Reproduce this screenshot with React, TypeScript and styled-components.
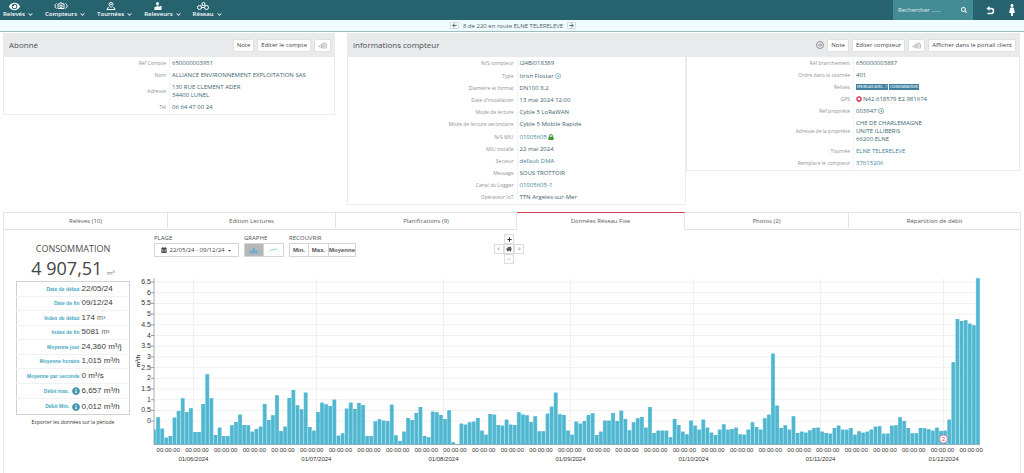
import React from "react";
import styled, { createGlobalStyle } from "styled-components";
import {
  FaEye,
  FaFemale,
  FaSearch,
  FaChevronDown,
  FaArrowLeft,
  FaArrowRight,
  FaCalendarAlt,
  FaInfoCircle,
  FaLock,
  FaCaretDown,
  FaHome,
  FaPlus,
  FaMinus,
} from "react-icons/fa";

const Global = createGlobalStyle`
  * { box-sizing: border-box; }
  body {
    margin: 0;
    background: #fff;
    color: #4a5a60;
    font-family: "Open Sans", "Liberation Sans", sans-serif;
    font-size: 6px;
    line-height: 8px;
  }
  button, input { font: inherit; color: inherit; margin: 0; }
  button { cursor: pointer; }
  a { color: inherit; text-decoration: none; }
  svg { display: block; }
`;

/* ---------- top bar ---------- */

const TopBar = styled.header`
  display: flex;
  align-items: stretch;
  height: 20px;
  background: #27626f;
  color: #fff;
`;

const Nav = styled.nav`
  display: flex;
  gap: 12px;
  flex: 1;
  padding-left: 3px;
`;

const NavItem = styled.button`
  display: grid;
  grid-template-columns: auto auto;
  grid-template-rows: 8px 8px;
  column-gap: 3px;
  align-content: center;
  align-items: center;
  justify-items: center;
  padding: 0;
  border: 0;
  background: none;
  font-size: 6px;
  font-weight: 600;
  white-space: nowrap;
`;

const NavLabel = styled.span`
  grid-row: 2;
  grid-column: 1;
`;

const NavChevron = styled.span`
  grid-row: 2;
  grid-column: 2;
`;

const SearchBox = styled.label`
  display: flex;
  align-items: center;
  width: 80px;
  padding: 0 6px 0 5px;
  background: #438b95;
`;

const SearchInput = styled.input`
  flex: 1;
  min-width: 0;
  padding: 0;
  border: 0;
  outline: 0;
  background: none;
  font-size: 6px;
  &::placeholder { color: #e3f0f2; opacity: 1; }
`;

const TopIcons = styled.div`
  display: flex;
  align-items: center;
  gap: 11px;
  padding: 0 6px 0 13px;
`;

const PlainButton = styled.button`
  padding: 0;
  border: 0;
  background: none;
`;

/* ---------- pager ---------- */

const Pager = styled.div`
  display: flex;
  align-items: center;
  justify-content: center;
  gap: 4px;
  height: 12px;
  padding-left: 2px;
  border-bottom: 1px solid #9dbac2;
  background: #effcff;
`;

const PagerButton = styled.button`
  display: flex;
  align-items: center;
  justify-content: center;
  width: 9px;
  height: 7px;
  padding: 0;
  border: 1px solid #cfdfe3;
  border-radius: 1px;
  background: #f8feff;
  color: #44707c;
`;

/* ---------- panels ---------- */

const Panels = styled.main`
  display: grid;
  grid-template-columns: 332fr 673fr;
  gap: 12px;
  align-items: start;
  padding: 1px 4px 7px 3px;
`;

const PanelHead = styled.div`
  display: flex;
  align-items: center;
  gap: 3px;
  height: 24px;
  padding: 0 4px 0 6px;
  background: #e9eaec;
`;

const PanelTitle = styled.h2`
  flex: 1;
  margin: 0;
  font-size: 8px;
  line-height: 10px;
  font-weight: 400;
  color: #4b4f54;
`;

const HeadButton = styled.button`
  display: flex;
  align-items: center;
  height: 13px;
  padding: 0 3px;
  border: 1px solid #e0e1e3;
  border-radius: 1px;
  background: #fff;
  font-size: 6px;
  color: #3f4448;
  white-space: nowrap;
`;

const Columns = styled.div`
  display: grid;
  grid-template-columns: 339fr 334fr;
  align-items: start;
`;

const Details = styled.dl`
  margin: 0;
  padding-bottom: 1px;
  border: 1px solid #ececee;
  border-top: 0;
`;

const Row = styled.div<{ $tall?: boolean }>`
  display: grid;
  grid-template-columns: 1fr 1fr;
  align-items: center;
  min-height: ${(p) => (p.$tall ? 13 : 12)}px;
`;

const Term = styled.dt`
  padding-right: 3px;
  font-size: 5px;
  text-align: right;
  color: #8d9397;
`;

const Value = styled.dd<{ $link?: boolean }>`
  display: flex;
  align-items: center;
  gap: 1px;
  min-height: 12px;
  margin: 0;
  padding: 2px 0 2px 2px;
  border-left: 1px solid #f3f3f4;
  color: ${(p) => (p.$link ? "#3f7f9c" : "#3d6470")};
  white-space: pre-line;
`;

const Tag = styled.span`
  padding: 0 1px;
  background: #3f7f9c;
  color: #d5e6ee;
  font-size: 3px;
  line-height: 6px;
  font-weight: 700;
  white-space: nowrap;
`;

/* ---------- tabs ---------- */

const Tabs = styled.div`
  display: grid;
  grid-template-columns: 165fr 168fr 181fr 168fr 164fr 172fr;
  margin: 0 3px;
`;

const Tab = styled.button<{ $active?: boolean }>`
  height: 18px;
  padding: 0;
  border: 0;
  border-top: 1px solid ${(p) => (p.$active ? "#d9404f" : "#e4e4e6")};
  border-right: 1px solid #e4e4e6;
  border-bottom: 1px solid ${(p) => (p.$active ? "#ffffff" : "#e4e4e6")};
  background: #fff;
  font-size: 6px;
  color: #55595d;
  &:first-child { border-left: 1px solid #e4e4e6; }
`;

const TabPanel = styled.section`
  display: grid;
  grid-template-columns: 126px 1fr;
  margin: 0 3px;
  padding-bottom: 8px;
  border: solid #e8e8ea;
  border-width: 0 1px;
`;

/* ---------- summary ---------- */

const Summary = styled.div`
  padding: 12px 0 0 12px;
  text-align: center;
`;

const SummaryTitle = styled.h3`
  margin: 0;
  font-size: 9px;
  line-height: 14px;
  font-weight: 400;
  color: #4c4c4c;
`;

const Total = styled.div`
  font-size: 18px;
  line-height: 25px;
  color: #444;
  small { font-size: 6px; line-height: 6px; color: #777; }
`;

const Stats = styled.table`
  width: 100%;
  height: 134px;
  border: 1px solid #cfd3d6;
  border-collapse: collapse;
  font-family: "Liberation Sans", Arial, sans-serif;
  tr + tr { border-top: 1px solid #f0f1f2; }
`;

const StatName = styled.th`
  width: 65px;
  padding: 0 2px 0 0;
  font-size: 5px;
  text-align: right;
  white-space: nowrap;
  color: #4aa7bf;
  svg { display: inline-block; vertical-align: middle; color: #3f93ad; margin-left: 1px; }
`;

const StatValue = styled.td`
  padding: 0;
  font-size: 8px;
  text-align: left;
  white-space: nowrap;
  color: #3a3a3a;
  small { font-size: 7px; color: #666; }
`;

const ExportLink = styled.a`
  display: block;
  margin-top: 3px;
  font-size: 5px;
  color: #333;
`;

/* ---------- chart toolbar ---------- */

const Toolbar = styled.div`
  display: grid;
  grid-template-columns: 342fr 30px 498fr;
  align-items: start;
  height: 40px;
  padding: 4px 0 0 24px;
`;

const Controls = styled.div`
  display: flex;
  gap: 5px;
`;

const Group = styled.div`
  display: flex;
  flex-direction: column;
  gap: 1px;
  line-height: 8px;
  color: #4c5054;
`;

const GroupCaption = styled.span`
  height: 8px;
`;

const Segments = styled.div`
  display: flex;
`;

const Segment = styled.button<{ $on?: boolean; $width: number }>`
  display: flex;
  align-items: center;
  justify-content: center;
  gap: 2px;
  width: ${(p) => p.$width}px;
  height: 14px;
  padding: 0;
  border: 1px solid #d3d5d7;
  background: ${(p) => (p.$on ? "#b4b8bb" : "#fff")};
  color: #3f4448;
  white-space: nowrap;
  & + & { border-left-width: 0; }
`;

const SegmentText = styled.span`
  font-family: "Liberation Sans", Arial, sans-serif;
  font-size: 6px;
  font-weight: 700;
  color: #555;
`;

const PanPad = styled.div`
  display: grid;
  grid-template-columns: repeat(3, 10px);
  grid-template-rows: repeat(3, 10px);
  grid-template-areas: ". up ." "left home right" ". down .";
`;

const PanButton = styled.button<{ $area: string; $faint?: boolean }>`
  grid-area: ${(p) => p.$area};
  display: flex;
  align-items: center;
  justify-content: center;
  padding: 0;
  border: 1px solid #dcdcdc;
  background: #fff;
  color: ${(p) => (p.$faint ? "#b0b3b5" : "#333")};
`;

const ChartSvg = styled.svg`
  width: 100%;
  height: auto;
  font-family: "Liberation Sans", Arial, sans-serif;
  font-size: 6px;
  fill: #333;
`;

/* ---------- icons ---------- */

const MeterIcon = () => (
  <svg width="14" height="8" viewBox="0 0 28 16" fill="none" stroke="#fff" strokeWidth="2">
    <path d="M5 3C1 5 1 11 5 13M23 3c4 2 4 8 0 10M8 4h3l1-2h4l1 2h3v9H8z" />
    <circle cx="14" cy="8.500" r="2.500" />
  </svg>
);

const RouteIcon = () => (
  <svg width="10" height="8" viewBox="0 0 20 16" fill="none" stroke="#fff" strokeWidth="2">
    <path d="M10 11C7 8 6 6.500 6 5a4 4 0 0 1 8 0c0 1.500-1 3-4 6z" />
    <circle cx="10" cy="5" r="1" />
    <path d="M5 10l-3 5h16l-3-5" />
  </svg>
);

const ReaderIcon = () => (
  <svg width="8" height="8" viewBox="0 0 16 16" fill="#fff">
    <circle cx="7" cy="3" r="3" />
    <path d="M5 7h4v3h2V8h4v8H1v-6h4z" />
  </svg>
);

const NetworkIcon = () => (
  <svg width="14" height="8" viewBox="0 0 28 16" fill="none" stroke="#fff" strokeWidth="2">
    <circle cx="7" cy="11" r="4" />
    <circle cx="21" cy="11" r="4" />
    <circle cx="15" cy="4" r="3" />
    <path d="M11 11h6M13 6l-3 3M17 6l2 2" />
  </svg>
);

const BackIcon = () => (
  <svg width="9" height="9" viewBox="0 0 18 18" fill="none" stroke="#fff" strokeWidth="3">
    <path d="M4 5h6a5 5 0 0 1 0 10H3" />
    <path d="M1 5l6-5v10z" fill="#fff" stroke="none" />
  </svg>
);

const PinIcon = () => (
  <svg width="6" height="7" viewBox="0 0 12 14" fill="none" stroke="#d03a63" strokeWidth="3">
    <circle cx="6" cy="6" r="4" />
    <path d="M4 10l2 3 2-3z" fill="#d03a63" stroke="none" />
  </svg>
);

const TagIcon = () => (
  <svg width="9" height="7" viewBox="0 0 18 14" fill="none" stroke="#8a9094" strokeWidth="1">
    <path d="M1 9l7-4v6zM8 4h9v8H8zM10 4l3-3 3 3" />
    <circle cx="12.500" cy="8" r="2" />
  </svg>
);

const RingIcon = ({ size = 6, color = "#5b9db5" }: { size?: number; color?: string }) => (
  <svg width={size} height={size} viewBox="0 0 16 16" fill="none" stroke={color} strokeWidth="1.500">
    <circle cx="8" cy="8" r="7" />
    <path d="M4 8h7M8 5l3 3-3 3" />
  </svg>
);

const BarsIcon = () => (
  <svg width="10" height="7" viewBox="0 0 20 14" fill="#5fa9cc">
    <path d="M1 13V9h3v4zM5 13V6h3v7zM9 13V2h3v11zM13 13V7h3v6zM17 13v-3h2v3z" />
  </svg>
);

const LineIcon = () => (
  <svg width="9" height="6" viewBox="0 0 18 12" fill="none" stroke="#9ccdd6" strokeWidth="2">
    <path d="M1 9l5-4 4 1 3-3 4 4" />
  </svg>
);

/* ---------- chart ---------- */

// Daily consumption, three units per drawn pixel.
const DAILY = [
  43, 80, 46, 19, 24, 79, 99, 137, 96, 107, 36, 36, 120, 209, 137, 27, 49, 24, 24, 56,
  66, 88, 57, 56, 37, 45, 52, 120, 72, 86, 146, 39, 52, 138, 162, 116, 104, 154, 51, 40,
  96, 124, 119, 114, 133, 25, 32, 106, 124, 105, 123, 117, 24, 24, 68, 74, 70, 69, 118, 26,
  9, 37, 78, 72, 93, 111, 24, 20, 97, 95, 87, 75, 101, 5, 0, 61, 58, 65, 67, 78,
  40, 28, 90, 88, 57, 55, 73, 58, 57, 95, 88, 86, 66, 83, 38, 38, 91, 112, 154, 89,
  87, 40, 28, 67, 61, 69, 87, 92, 27, 37, 70, 70, 93, 69, 100, 75, 41, 65, 77, 81,
  49, 111, 33, 40, 40, 40, 20, 75, 57, 37, 29, 70, 55, 43, 73, 49, 34, 27, 43, 59,
  43, 45, 49, 29, 28, 43, 65, 51, 43, 77, 88, 271, 115, 48, 56, 43, 83, 33, 37, 34,
  41, 48, 49, 37, 33, 31, 48, 55, 43, 43, 48, 28, 38, 34, 37, 43, 52, 53, 31, 31,
  55, 56, 80, 69, 48, 32, 32, 48, 47, 44, 40, 49, 39, 40, 73, 245, 375, 369, 371, 361,
  356, 497,
];

const MONTHS: [string, number][] = [
  ["01/06/2024", 10],
  ["01/07/2024", 40],
  ["01/08/2024", 71],
  ["01/09/2024", 102],
  ["01/10/2024", 132],
  ["01/11/2024", 163],
  ["01/12/2024", 193],
];

const LEFT = 24;
const RIGHT = 850;
const BASE = 174;
const STEP = (RIGHT - LEFT) / (DAILY.length - 0.5);
const dayEdge = (day: number) => LEFT + (day - 0.5) * STEP;
const monthX = (day: number) => LEFT - 2 + (day + 0.1) * STEP;

const Chart = () => (
  <ChartSvg viewBox="0 0 890 196" role="img" aria-label="Consommation journalière en m³/h">
    <defs>
      <clipPath id="plot">
        <rect x={LEFT} y="0" width={RIGHT - LEFT} height={BASE} />
      </clipPath>
    </defs>
    {Array.from({ length: 14 }, (_, i) => {
      const y = 12 + i * 10.7;
      return (
        <g key={i}>
          <line x1={LEFT} x2={RIGHT} y1={y} y2={y} stroke="#f0f0f0" />
          <line x1={LEFT - 3} x2={LEFT} y1={y} y2={y} stroke="#777" strokeWidth="0.700" />
          <text x={LEFT - 3} y={y + 2} textAnchor="end" fontSize="7">
            {(6.5 - i * 0.5).toString()}
          </text>
        </g>
      );
    })}
    {MONTHS.map(([label, day]) => (
      <line
        key={label}
        x1={monthX(day)}
        x2={monthX(day)}
        y1="9"
        y2={BASE + 10}
        stroke="#ebebeb"
        strokeDasharray="3 1"
      />
    ))}
    <line x1={LEFT} x2={LEFT} y1="8" y2={BASE} stroke="#888" strokeWidth="0.700" />
    <g clipPath="url(#plot)">
      {DAILY.map((v, i) => (
        <g key={i}>
          <rect x={dayEdge(i)} y={BASE - v / 3} width={STEP} height={v / 3} fill="#86d4e6" />
          <rect x={dayEdge(i) + 0.5} y={BASE - v / 3} width={STEP - 1} height={v / 3} fill="#52b6cf" />
        </g>
      ))}
    </g>
    <line x1={LEFT} x2={RIGHT} y1={BASE + 0.5} y2={BASE + 0.5} stroke="#5a8f9c" strokeWidth="0.700" />
    {Array.from({ length: 29 }, (_, i) => (
      <text key={i} x={38.3 + i * 28.67} y={BASE + 8} textAnchor="middle">
        00:00:00
      </text>
    ))}
    {MONTHS.map(([label, day]) => (
      <text key={label} x={monthX(day)} y={BASE + 17} textAnchor="middle">
        {label}
      </text>
    ))}
    <text transform="translate(10 91) rotate(-90)" textAnchor="middle" fontWeight="700">
      m³/h
    </text>
    <circle cx={monthX(193)} cy="169" r="4" fill="#fff" stroke="#c68aa8" />
    <text x={monthX(193)} y="171" textAnchor="middle" fontSize="5" fill="#b03050">
      2
    </text>
  </ChartSvg>
);

/* ---------- page ---------- */

type Item = { term: string; value: string; link?: boolean; before?: React.ReactNode; after?: React.ReactNode; tall?: boolean };

const DetailList = ({ items }: { items: Item[] }) => (
  <Details>
    {items.map((it) => (
      <Row key={it.term} $tall={it.tall}>
        <Term>{it.term}</Term>
        <Value $link={it.link}>
          {it.before}
          {it.link ? <a href="#detail">{it.value}</a> : it.value}
          {it.after}
        </Value>
      </Row>
    ))}
  </Details>
);

const account: Item[] = [
  { term: "Réf Compte", value: "650000003951" },
  { term: "Nom", value: "ALLIANCE ENVIRONNEMENT EXPLOITATION SAS" },
  { term: "Adresse", value: "130 RUE CLEMENT ADER\n34400 LUNEL" },
  { term: "Tél", value: "06 64 47 00 24" },
];

const meter: Item[] = [
  { term: "N/S compteur", value: "I24BI018389" },
  { term: "Type", value: "Itron Flostar", after: <RingIcon />, tall: true },
  { term: "Diamètre et format", value: "DN100 8,2" },
  { term: "Date d'installation", value: "13 mai 2024 12:00" },
  { term: "Mode de lecture", value: "Cyble 5 LoRaWAN" },
  { term: "Mode de lecture secondaire", value: "Cyble 5 Mobile Rapide" },
  { term: "N/S MIU", value: "01005605", link: true, after: <FaLock size={6} color="#3f9a35" />, tall: true },
  { term: "MIU installé", value: "22 mai 2024" },
  { term: "Secteur", value: "default DMA", link: true },
  { term: "Message", value: "SOUS TROTTOIR" },
  { term: "Canal du Logger", value: "01005605-1", link: true },
  { term: "Opérateur IoT", value: "TTN Argeles-sur-Mer" },
];

const branch: Item[] = [
  { term: "Réf branchement", value: "650000003887" },
  { term: "Ordre dans la tournée", value: "401" },
  {
    term: "Relises",
    value: "",
    before: (
      <>
        <Tag>SPB RELAIS AVRIL - 7</Tag>
        <Tag>(CONSOMMATEUR)</Tag>
      </>
    ),
  },
  { term: "GPS", value: "N42.618579 E2.981674", before: <PinIcon /> },
  { term: "Réf propriété", value: "003947", after: <RingIcon color="#4a7d8f" /> },
  { term: "Adresse de la propriété", value: "CHE DE CHARLEMAGNE\nUNITE ILLIBERIS\n66200 ELNE" },
  { term: "Tournée", value: "ELNE TELERELEVE", link: true },
  { term: "Remplace le compteur", value: "37615206", link: true },
];

const stats: { name: string; value: string; unit?: string; info?: boolean }[] = [
  { name: "Date de début", value: "22/05/24" },
  { name: "Date de fin", value: "09/12/24" },
  { name: "Index de début", value: "174", unit: "m³" },
  { name: "Index de fin", value: "5081", unit: "m³" },
  { name: "Moyenne jour", value: "24,360 m³/j" },
  { name: "Moyenne horaire", value: "1,015 m³/h" },
  { name: "Moyenne par seconde", value: "0 m³/s" },
  { name: "Débit max.", value: "6,657 m³/h", info: true },
  { name: "Débit Min.", value: "0,012 m³/h", info: true },
];

const navItems: [string, React.ReactNode][] = [
  ["Relevés", <FaEye size={11} />],
  ["Compteurs", <MeterIcon />],
  ["Tournées", <RouteIcon />],
  ["Releveurs", <ReaderIcon />],
  ["Réseau", <NetworkIcon />],
];

const tabs = [
  "Relèves (10)",
  "Edition Lectures",
  "Planifications (9)",
  "Données Réseau Fixe",
  "Photos (2)",
  "Répartition de débit",
];

export default function App() {
  return (
    <>
      <Global />
      <TopBar>
        <Nav>
          {navItems.map(([label, icon]) => (
            <NavItem key={label}>
              {icon}
              <NavLabel>{label}</NavLabel>
              <NavChevron>
                <FaChevronDown size={5} />
              </NavChevron>
            </NavItem>
          ))}
        </Nav>
        <SearchBox>
          <SearchInput aria-label="Rechercher" placeholder="Rechercher ......" />
          <FaSearch size={6} />
        </SearchBox>
        <TopIcons>
          <PlainButton aria-label="Retour">
            <BackIcon />
          </PlainButton>
          <PlainButton aria-label="Profil">
            <FaFemale size={12} />
          </PlainButton>
        </TopIcons>
      </TopBar>

      <Pager>
        <PagerButton aria-label="Précédent">
          <FaArrowLeft size={5} />
        </PagerButton>
        <span>8 de 220 en route ELNE TELERELEVE</span>
        <PagerButton aria-label="Suivant">
          <FaArrowRight size={5} />
        </PagerButton>
      </Pager>

      <Panels>
        <section>
          <PanelHead>
            <PanelTitle>Abonné</PanelTitle>
            <HeadButton>Note</HeadButton>
            <HeadButton>Editer le compte</HeadButton>
            <HeadButton aria-label="Étiquette">
              <TagIcon />
            </HeadButton>
          </PanelHead>
          <DetailList items={account} />
        </section>
        <section>
          <PanelHead>
            <PanelTitle>informations compteur</PanelTitle>
            <PlainButton aria-label="Historique">
              <RingIcon size={8} color="#6d7478" />
            </PlainButton>
            <HeadButton>Note</HeadButton>
            <HeadButton>Editer compteur</HeadButton>
            <HeadButton aria-label="Étiquette">
              <TagIcon />
            </HeadButton>
            <HeadButton>Afficher dans le portail client</HeadButton>
          </PanelHead>
          <Columns>
            <DetailList items={meter} />
            <DetailList items={branch} />
          </Columns>
        </section>
      </Panels>

      <Tabs role="tablist">
        {tabs.map((t) => (
          <Tab key={t} role="tab" $active={t === "Données Réseau Fixe"} aria-selected={t === "Données Réseau Fixe"}>
            {t}
          </Tab>
        ))}
      </Tabs>
      <TabPanel>
        <Summary>
          <SummaryTitle>CONSOMMATION</SummaryTitle>
          <Total>
            4 907,51 <small>m³</small>
          </Total>
          <Stats>
            <tbody>
              {stats.map((s) => (
                <tr key={s.name}>
                  <StatName scope="row">
                    {s.name} {s.info && <FaInfoCircle size={8} />}
                  </StatName>
                  <StatValue>
                    {s.value} {s.unit && <small>{s.unit}</small>}
                  </StatValue>
                </tr>
              ))}
            </tbody>
          </Stats>
          <ExportLink href="#export">Exporter les données sur la période</ExportLink>
        </Summary>
        <div>
          <Toolbar>
            <Controls>
              <Group>
                <GroupCaption>PLAGE</GroupCaption>
                <Segment $width={85}>
                  <FaCalendarAlt size={6} />
                  22/05/24 - 09/12/24
                  <FaCaretDown size={5} />
                </Segment>
              </Group>
              <Group>
                <GroupCaption>GRAPHE</GroupCaption>
                <Segments>
                  <Segment $width={20} $on aria-label="Barres">
                    <BarsIcon />
                  </Segment>
                  <Segment $width={20} aria-label="Courbe">
                    <LineIcon />
                  </Segment>
                </Segments>
              </Group>
              <Group>
                <GroupCaption>RECOUVRIR</GroupCaption>
                <Segments>
                  <Segment $width={20}>
                    <SegmentText>Min.</SegmentText>
                  </Segment>
                  <Segment $width={20}>
                    <SegmentText>Max.</SegmentText>
                  </Segment>
                  <Segment $width={27}>
                    <SegmentText>Moyenne</SegmentText>
                  </Segment>
                </Segments>
              </Group>
            </Controls>
            <PanPad>
              <PanButton $area="up" aria-label="Agrandir">
                <FaPlus size={5} />
              </PanButton>
              <PanButton $area="left" $faint aria-label="Gauche">
                <FaArrowLeft size={4} />
              </PanButton>
              <PanButton $area="home" aria-label="Réinitialiser">
                <FaHome size={6} />
              </PanButton>
              <PanButton $area="right" $faint aria-label="Droite">
                <FaArrowRight size={4} />
              </PanButton>
              <PanButton $area="down" $faint aria-label="Réduire">
                <FaMinus size={4} />
              </PanButton>
            </PanPad>
          </Toolbar>
          <Chart />
        </div>
      </TabPanel>
    </>
  );
}
